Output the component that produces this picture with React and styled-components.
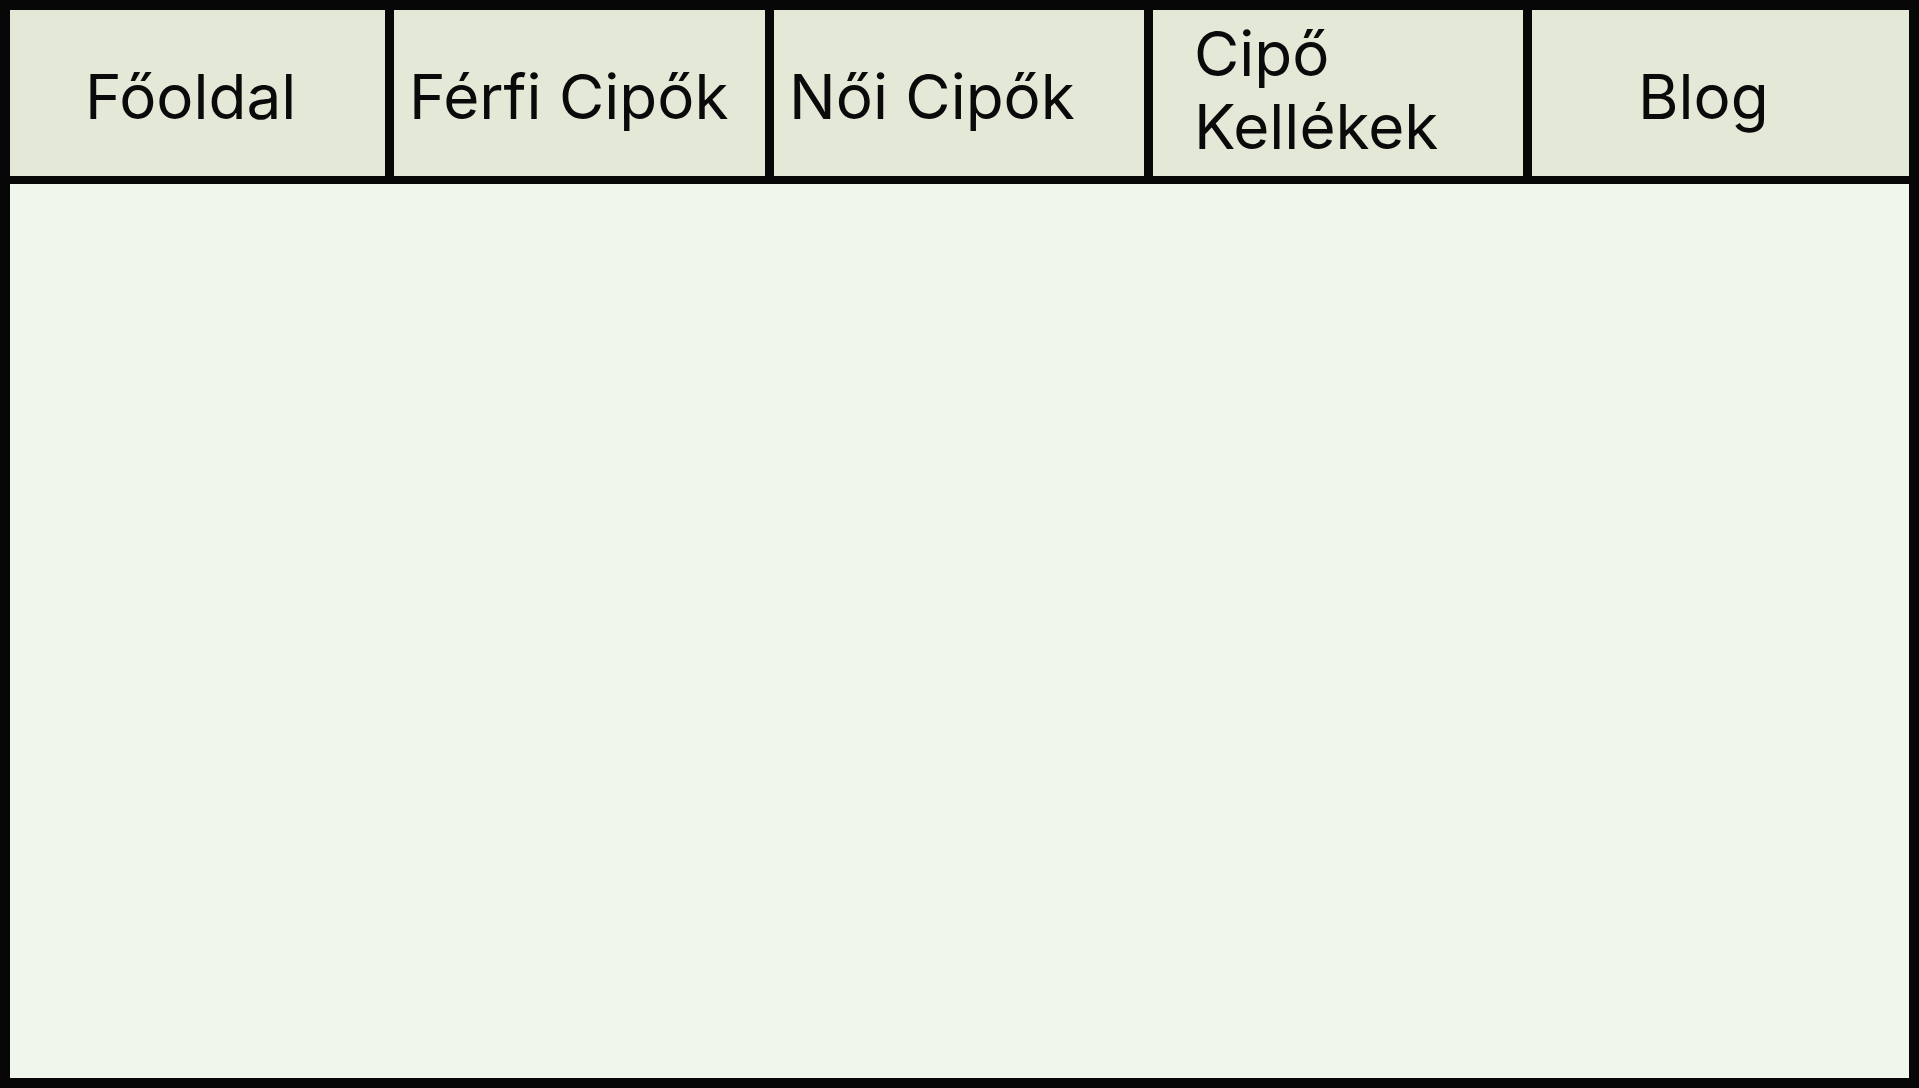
import React from 'react'
import styled, { createGlobalStyle } from 'styled-components'

const GlobalStyle = createGlobalStyle`
  html, body {
    margin: 0;
    padding: 0;
    background: #070707;
  }
  body {
    font-family: Inter, "Noto Sans", sans-serif;
  }
  * {
    box-sizing: border-box;
  }
`

const Frame = styled.div`
  height: 100vh;
  padding: 10px;
  background: #070707;
  display: flex;
  flex-direction: column;
  gap: 10px;
`

const Nav = styled.nav`
  height: 164px;
  display: grid;
  grid-template-columns: 375px 371px 370px 370px 1fr;
  column-gap: 9px;
`

const Tab = styled.a`
  display: flex;
  align-items: center;
  padding: 7px 0 0 ${props => props.$inset}px;
  background: #e4e8d7;
  color: #0a0a0a;
  text-decoration: none;
  font-size: 62px;
  cursor: pointer;
`

const Label = styled.span`
  display: block;
  width: ${props => props.$stacked ? 'min-content' : 'auto'};
  white-space: ${props => props.$stacked ? 'normal' : 'nowrap'};
  line-height: ${props => props.$stacked ? '73px' : 'normal'};
  margin-bottom: ${props => props.$stacked ? '13px' : '0'};
`

const Content = styled.main`
  flex: 1;
  background: #f0f6ec;
`

const links = [
  { label: 'Főoldal', inset: 75 },
  { label: 'Férfi Cipők', inset: 15 },
  { label: 'Női Cipők', inset: 15 },
  { label: 'Cipő Kellékek', inset: 41, stacked: true },
  { label: 'Blog', inset: 106 },
]

const App = () => {
  return (
    <>
      <GlobalStyle />
      <Frame>
        <Nav>
          {links.map(link => (
            <Tab key={link.label} $inset={link.inset}>
              <Label $stacked={link.stacked}>{link.label}</Label>
            </Tab>
          ))}
        </Nav>
        <Content />
      </Frame>
    </>
  )
}

export default App
